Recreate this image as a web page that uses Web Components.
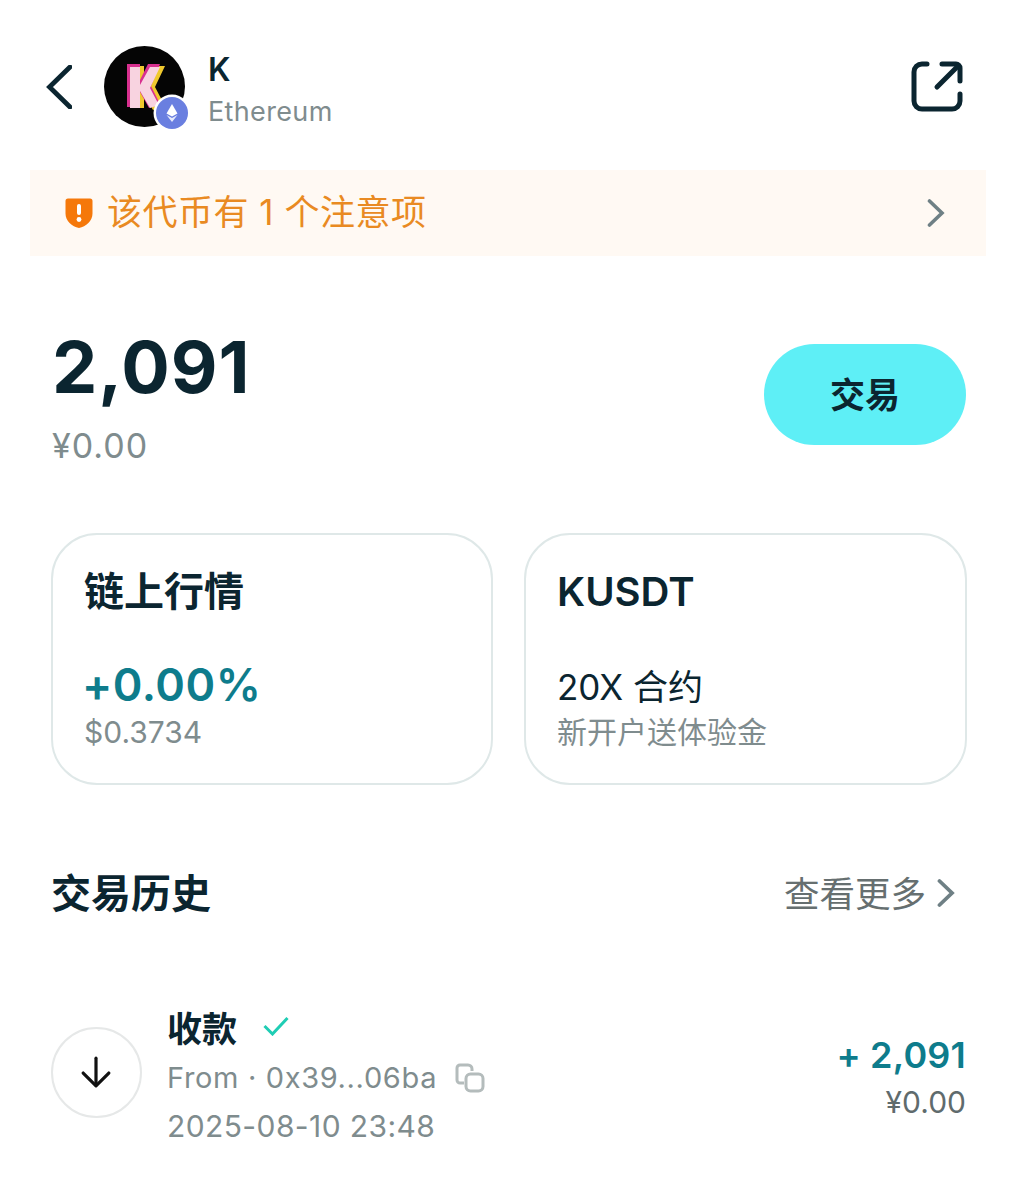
<!DOCTYPE html>
<html>
<head>
<meta charset="utf-8">
<style>
  html, body { margin: 0; background: #fff; }
  body {
    font-family: Inter, "Noto Sans CJK SC", sans-serif;
    color: #0b2530;
    width: 1017px;
    height: 1200px;
    overflow: hidden;
  }
</style>
</head>
<body>
<token-page></token-page>

<template id="token-header-tpl">
  <style>
    :host { display: flex; align-items: center; height: 81px; margin: 46px 0 0 0; padding: 0 54px 0 46px; }
    .back { width: 26px; height: 44px; margin-right: 32px; flex: none; }
    .avatar { position: relative; width: 81px; height: 81px; flex: none; margin-right: 23px; }
    .name { font-size: 32px; font-weight: 600; line-height: 38px; }
    .chain { font-size: 27px; line-height: 32px; color: #7f8c8e; margin-top: 7px; letter-spacing: 0.35px; }
    .info { flex: 1; margin-top: 5px; }
    .share { width: 52px; height: 52px; flex: none; }
  </style>
  <svg class="back" viewBox="0 0 26 44" fill="none"><path d="M24 2 3.500 22 24 42" stroke="#0b2530" stroke-width="4.800" stroke-linecap="round"/></svg>
  <div class="avatar">
    <svg width="81" height="81" viewBox="0 0 81 81">
      <circle cx="40.500" cy="40.500" r="40.500" fill="#050505"/>
      <path d="M27 20h13v13l7-13h14l-10 21 10 19-12 4-9-16v14H27z" fill="#f0c92e"/>
      <path d="M23 18h13v16l8-16h12l-9 22 9 18-11 4-9-16v15H23z" fill="#d8308f"/>
      <path d="M26 21h10v18l10-18h10l-10 21 9 17-9 3-10-17v17H26z" fill="#f8d3e0"/>
    </svg>
    <token-chain-badge></token-chain-badge>
  </div>
  <div class="info">
    <div class="name">K</div>
    <div class="chain">Ethereum</div>
  </div>
  <svg class="share" viewBox="0 0 52 52" fill="none" stroke="#0b2530" stroke-width="5" stroke-linecap="round" stroke-linejoin="round">
    <path d="M16 3H11a8 8 0 0 0-8 8v29a8 8 0 0 0 8 8h30a8 8 0 0 0 8-8v-7"/>
    <path d="M31 3h14a4 4 0 0 1 4 4v13"/>
    <path d="M47 5 26 26"/>
  </svg>
</template>

<template id="token-chain-badge-tpl">
  <style>
    :host { display: block; position: absolute; right: -3px; bottom: -2px; width: 32px; height: 32px; border-radius: 50%; background: #6a7fe0; box-shadow: 0 0 0 2.500px #fff; }
    svg { display: block; width: 32px; height: 32px; }
  </style>
  <svg viewBox="0 0 32 32"><path d="M16 7 10.500 16.500 16 19.500l5.500-3z" fill="#fff"/><path d="M10.500 18 16 25l5.500-7-5.500 3z" fill="#e6eafb"/></svg>
</template>

<template id="risk-banner-tpl">
  <style>
    :host { display: flex; align-items: center; height: 86px; margin: 43px 31px 0 30px; padding: 0 41px 0 35px; background: #fff9f3; color: #e98a22; font-size: 35px; }
    .shield { width: 28px; height: 32px; margin-right: 14px; flex: none; }
    .text { flex: 1; margin-top: -8px; letter-spacing: 0.5px; }
    .more { width: 18px; height: 30px; flex: none; }
  </style>
  <svg class="shield" viewBox="0 0 28 32"><path d="M3 1.500h22a2.500 2.500 0 0 1 2.500 2.500v12.500C27.500 24 21 29.500 14 31 7 29.500.5 24 .5 16.500V4A2.500 2.500 0 0 1 3 1.500z" fill="#f5780a"/><rect x="12" y="7" width="4" height="11" rx="2" fill="#fff"/><circle cx="14" cy="22.500" r="2.400" fill="#fff"/></svg>
  <div class="text"><slot></slot></div>
  <svg class="more" viewBox="0 0 18 30" fill="none"><path d="M2.500 3 15 15 2.500 27" stroke="#6f8085" stroke-width="3.600" stroke-linecap="round"/></svg>
</template>

<template id="balance-summary-tpl">
  <style>
    :host { display: flex; align-items: flex-start; justify-content: space-between; margin: 64px 51px 0 52px; }
    .amount { font-size: 72px; font-weight: 700; line-height: 94px; letter-spacing: 1px; }
    .fiat { font-size: 34px; line-height: 42px; color: #7f8c8e; margin-top: 11px; letter-spacing: 1px; }
    .trade { box-sizing: border-box; width: 202px; height: 101px; margin-top: 24px; padding-bottom: 5px; border-radius: 51px; background: #5eeff6; display: flex; align-items: center; justify-content: center; font-size: 35px; font-weight: 600; }
  </style>
  <div>
    <div class="amount"><slot name="amount"></slot></div>
    <div class="fiat"><slot name="fiat"></slot></div>
  </div>
  <div class="trade"><slot name="action"></slot></div>
</template>

<template id="info-card-tpl">
  <style>
    :host { display: block; box-sizing: border-box; height: 252px; border: 2.500px solid #dfe8e8; border-radius: 46px; padding: 32px 31px 0; }
    .title { font-size: 40px; line-height: 50px; font-weight: 600; height: 50px; }
    .value { margin-top: 42px; line-height: 52px; height: 52px; }
    .note { font-size: 30px; line-height: 38px; color: #7f8c8e; margin-top: 2px; }
  </style>
  <div class="title"><slot name="title"></slot></div>
  <div class="value"><slot name="value"></slot></div>
  <div class="note"><slot name="note"></slot></div>
</template>

<template id="section-head-tpl">
  <style>
    :host { display: flex; align-items: center; justify-content: space-between; height: 52px; margin: 80px 62px 0 51px; }
    .title { font-size: 40px; font-weight: 600; }
    .more { display: flex; align-items: center; color: #666f70; font-size: 35.500px; }
    svg { width: 18px; height: 30px; margin: 4px 0 0 11px; }
  </style>
  <div class="title"><slot name="title"></slot></div>
  <div class="more"><slot name="more"></slot><svg viewBox="0 0 18 30" fill="none"><path d="M2.500 3 15 15 2.500 27" stroke="#6f8085" stroke-width="3.800" stroke-linecap="round"/></svg></div>
</template>

<template id="tx-row-tpl">
  <style>
    :host { display: flex; margin: 83px 51px 0; align-items: flex-start; }
    .circle { box-sizing: border-box; width: 91px; height: 91px; border: 2.500px solid #e6e8e8; border-radius: 50%; display: flex; align-items: center; justify-content: center; margin: 27px 25px 0 0; flex: none; }
    .circle svg { width: 32px; height: 32px; margin: -2px 1px 0 0; }
    .main { flex: 1; padding-top: 4px; }
    .title { display: flex; align-items: center; font-size: 35px; font-weight: 600; line-height: 50px; height: 50px; }
    .title svg { width: 26px; height: 20px; margin: -6px 0 0 26px; }
    .line { display: flex; align-items: center; font-size: 29px; line-height: 48px; color: #7f8c8e; letter-spacing: 0.65px; }
    .time { font-size: 30px; letter-spacing: 0.4px; line-height: 48px; color: #7f8c8e; }
    .copy { width: 30px; height: 30px; margin-left: 18px; }
    .side { text-align: right; margin-top: 32px; }
    .amount { font-size: 36px; font-weight: 600; line-height: 46px; color: #0e7c8c; letter-spacing: 0.2px; }
    .fiat { font-size: 30px; line-height: 48px; color: #5f6b6d; }
  </style>
  <div class="circle">
    <svg viewBox="0 0 30 30" fill="none" stroke="#111" stroke-width="3" stroke-linecap="round" stroke-linejoin="round"><path d="M15 2v25"/><path d="M3 16 15 28 27 16"/></svg>
  </div>
  <div class="main">
    <div class="title"><slot name="title"></slot><svg viewBox="0 0 26 20" fill="none"><path d="M1.500 10 9.500 18 24.500 2" stroke="#1fcdb4" stroke-width="3"/></svg></div>
    <div class="line"><slot name="from"></slot>
      <svg class="copy" viewBox="0 0 30 30" fill="none" stroke="#b4bcbc" stroke-width="3"><path d="M9 20H5a3 3 0 0 1-3-3V5a3 3 0 0 1 3-3h8a4 4 0 0 1 4 4v2"/><rect x="11" y="11" width="17" height="17" rx="4.500"/></svg>
    </div>
    <div class="time"><slot name="time"></slot></div>
  </div>
  <div class="side">
    <div class="amount"><slot name="amount"></slot></div>
    <div class="fiat"><slot name="fiat"></slot></div>
  </div>
</template>

<template id="token-page-tpl">
  <style>
    :host { display: block; }
    .cards { display: grid; grid-template-columns: 442px 443px; gap: 31px; margin: 66px 51px 0; }
    .up { font-size: 45px; font-weight: 600; color: #0e7c8c; letter-spacing: 0.5px; margin-left: -2px; }
    .plain { display: block; padding-top: 2px; font-size: 35px; }
  </style>
  <token-header></token-header>
  <risk-banner>该代币有 1 个注意项</risk-banner>
  <balance-summary>
    <span slot="amount">2,091</span>
    <span slot="fiat">¥0.00</span>
    <span slot="action">交易</span>
  </balance-summary>
  <div class="cards">
    <info-card>
      <span slot="title">链上行情</span>
      <span slot="value" class="up">+0.00%</span>
      <span slot="note">$0.3734</span>
    </info-card>
    <info-card>
      <span slot="title">KUSDT</span>
      <span slot="value" class="plain">20X 合约</span>
      <span slot="note">新开户送体验金</span>
    </info-card>
  </div>
  <section-head>
    <span slot="title">交易历史</span>
    <span slot="more">查看更多</span>
  </section-head>
  <tx-row>
    <span slot="title">收款</span>
    <span slot="from">From · 0x39...06ba</span>
    <span slot="time">2025-08-10 23:48</span>
    <span slot="amount">+ 2,091</span>
    <span slot="fiat">¥0.00</span>
  </tx-row>
</template>

<script>
  // every element just stamps its own template into an open shadow root
  const define = (name) => {
    customElements.define(name, class extends HTMLElement {
      constructor() {
        super();
        const shadow = this.attachShadow({ mode: "open" });
        shadow.appendChild(document.getElementById(`${name}-tpl`).content.cloneNode(true));
      }
    });
  };

  ["token-chain-badge", "token-header", "risk-banner", "balance-summary", "info-card", "section-head", "tx-row", "token-page"].forEach(define);
</script>
</body>
</html>
